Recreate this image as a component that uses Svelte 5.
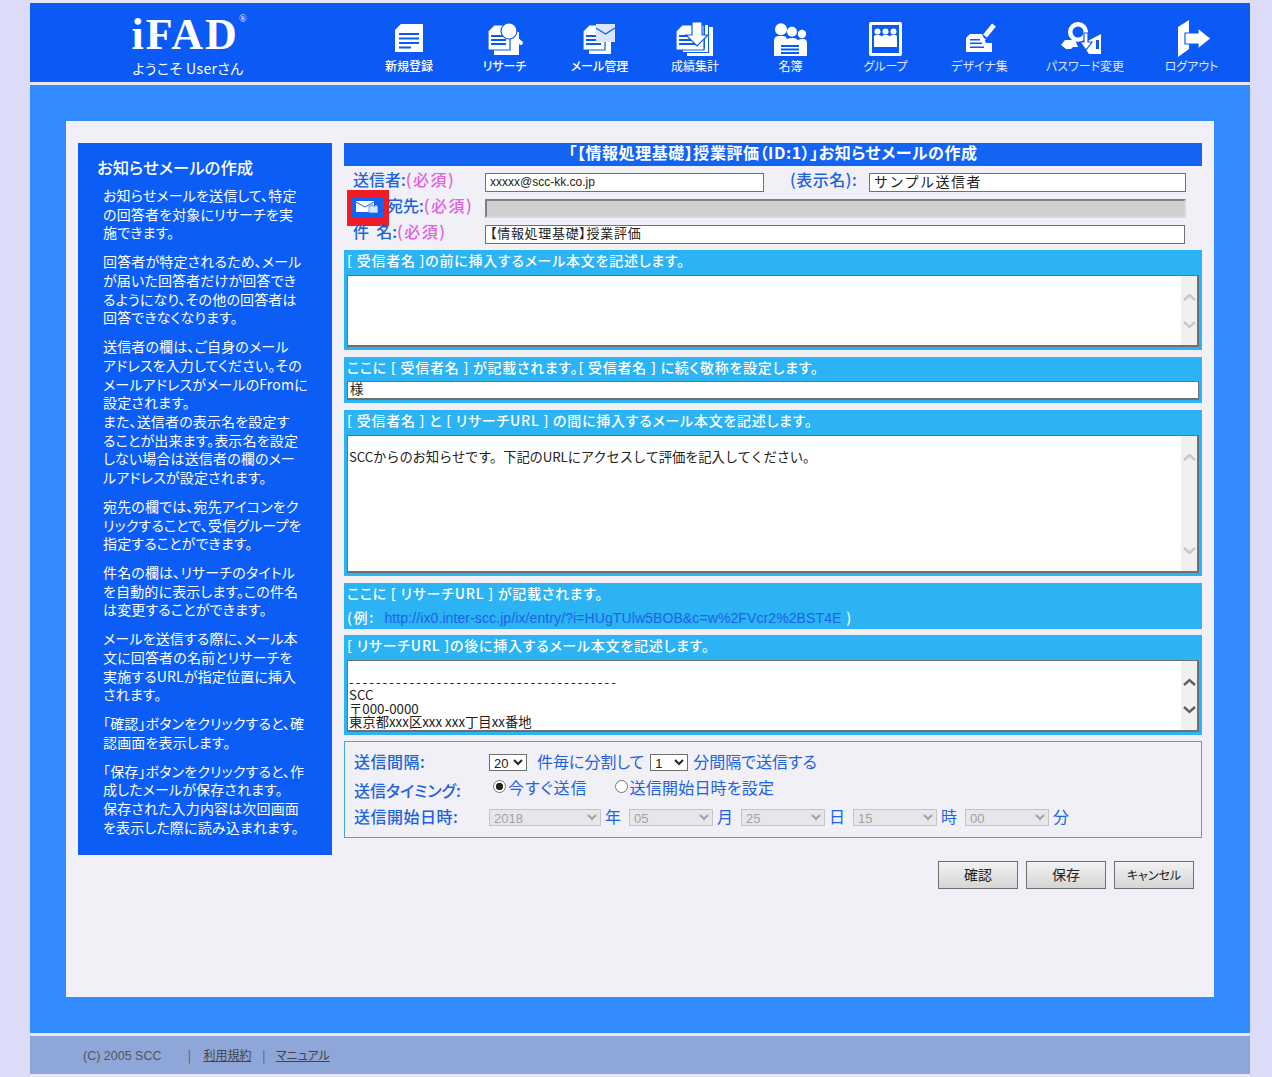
<script>
  const guide = [
    "お知らせメールを送信して、特定<br>の回答者を対象にリサーチを実<br>施できます。",
    "回答者が特定されるため、メール<br>が届いた回答者だけが回答でき<br>るようになり、その他の回答者は<br>回答できなくなります。",
    "送信者の欄は、ご自身のメール<br>アドレスを入力してください。その<br>メールアドレスがメールのFromに<br>設定されます。<br>また、送信者の表示名を設定す<br>ることが出来ます。表示名を設定<br>しない場合は送信者の欄のメー<br>ルアドレスが設定されます。",
    "宛先の欄では、宛先アイコンをク<br>リックすることで、受信グループを<br>指定することができます。",
    "件名の欄は、リサーチのタイトル<br>を自動的に表示します。この件名<br>は変更することができます。",
    "メールを送信する際に、メール本<br>文に回答者の名前とリサーチを<br>実施するURLが指定位置に挿入<br>されます。",
    "「確認」ボタンをクリックすると、確<br>認画面を表示します。",
    "「保存」ボタンをクリックすると、作<br>成したメールが保存されます。<br>保存された入力内容は次回画面<br>を表示した際に読み込まれます。"
  ];
</script>

<div class="page">
  <header>
    <div class="logo">
      <div class="mark">iFAD<sup>®</sup></div>
      <div class="hello">ようこそ Userさん</div>
    </div>
    <nav>
      <a href="#a">
        <svg viewBox="0 0 44 40">
          <path d="M14 6H36V34H8V12Z"/>
          <path class="b" d="M12 15H32V17H12ZM12 19.5H32V21.5H12ZM12 24H32V26H12ZM12 28.5H24V30.5H12Z"/>
        </svg>
        新規登録
      </a>
      <a href="#a">
        <svg viewBox="0 0 44 40">
          <path d="M11 14H36V37H11Z"/>
          <path class="o" d="M11 7H27V32H5V13Z"/>
          <path class="b" d="M8 17H23V19H8ZM8 21H23V23H8ZM8 25H23V27H8Z"/>
          <path class="h" d="M30 18L38 25"/>
          <circle class="o" cx="26" cy="13" r="8"/>
        </svg>
        リサーチ
      </a>
      <a href="#a">
        <svg viewBox="0 0 44 40">
          <path d="M11 14H33V36H11Z"/>
          <path class="o" d="M11 7H27V32H5V13Z"/>
          <path class="b" d="M8 17H18V19H8ZM8 21H23V23H8ZM8 25H23V27H8Z"/>
          <path class="env" d="M18 6H37V24H18Z"/>
          <path class="v" d="M18 10L27.5 16L37 10"/>
        </svg>
        メール管理
      </a>
      <a href="#a">
        <svg viewBox="0 0 44 40">
          <path d="M36 9H40V38H14V35H36Z"/>
          <path d="M32 7H35V34H10V31H32Z"/>
          <path class="o" d="M9 7H31V32H3V13Z"/>
          <path class="b" d="M6 17H20V19H6ZM6 21H22V23H6ZM6 25H26V27H6Z"/>
          <path class="o" d="M19 4H29V17H35L24 28L13 17H19Z"/>
        </svg>
        成績集計
      </a>
      <a href="#a">
        <svg viewBox="0 0 44 40">
          <circle cx="33" cy="16" r="4.2"/>
          <circle cx="23" cy="13.7" r="5"/>
          <circle cx="12" cy="11.3" r="6"/>
          <path d="M5 38V23Q5 18 10 18H14Q17 18 18 21Q20 20 24 20Q27 20 29 22Q31 21 34 21Q38 21 38 25V38Z"/>
          <path class="b" d="M12 27H30V29H12ZM12 30.5H30V32.5H12ZM12 34H30V36H12Z"/>
        </svg>
        名簿
      </a>
      <a href="#a">
        <svg viewBox="0 0 44 40">
          <rect x="5" y="4" width="33" height="34" rx="2"/>
          <rect class="b" x="8" y="7" width="27" height="28"/>
          <circle cx="13.5" cy="13.5" r="3"/>
          <circle cx="21.5" cy="13.5" r="3"/>
          <circle cx="29.5" cy="13.5" r="3"/>
          <path d="M10 29V18.5Q10 17 12 17H15Q16.5 17 17.5 18.5Q18.5 17 20 17H23Q24.5 17 25.5 18.5Q26.5 17 28 17H31Q33 17 33 18.5V29Z"/>
        </svg>
        グループ
      </a>
      <a href="#a">
        <svg viewBox="0 0 44 40">
          <path d="M8 20L12 16H24L28 25H34V34H8Z"/>
          <path class="b" d="M12 21H22V22.6H12ZM12 24.5H24V26H12ZM12 28.5H26V30H12Z"/>
          <path class="p" d="M27 18L36 7"/>
          <path d="M24 24L24.6 19L28 21.5Z"/>
        </svg>
        デザイナ集
      </a>
      <a href="#a">
        <svg viewBox="0 0 44 40">
          <path d="M-2 27L2 22H12L15 29H10L8 31H3Z"/>
          <circle class="ring" cx="15" cy="14" r="7.8"/>
          <path d="M19 26L38 16V36H26Z"/>
          <path class="b" d="M33 22H36V31H33Z"/>
          <path class="o" d="M21 15H25V24H29L23 32L17 24H21Z"/>
        </svg>
        パスワード変更
      </a>
      <a href="#a">
        <svg viewBox="0 0 44 40">
          <path d="M8 9L19 2V31L8 39Z"/>
          <path class="o" d="M15 15H28V10L41 20.5L28 31V26H15Z"/>
        </svg>
        ログアウト
      </a>
    </nav>
  </header>

  <main>
    <div class="panel">
      <aside>
        <h2>お知らせメールの作成</h2>
        {#each guide as text}
          <p>{@html text}</p>
        {/each}
      </aside>

      <form>
        <h1>「【情報処理基礎】授業評価（ID:1）」お知らせメールの作成</h1>

        <div class="row">
          <label class="name" for="from">送信者:<em>(必須)</em></label>
          <input id="from" class="mail" value="xxxxx@scc-kk.co.jp" />
          <label class="disp" for="disp">(表示名):</label>
          <input id="disp" class="sender" value="サンプル送信者" />
        </div>
        <div class="row">
          <span class="pick">
            <svg viewBox="0 0 31 20" width="31" height="20">
              <path class="mailback" d="M4 4H22V15H4Z"/>
              <path class="mailv" d="M4 5L13 10L22 5"/>
              <path class="grp" d="M17 9H19V8H21V9H23V8H25V9H26V16H17Z"/>
            </svg>
          </span>
          <label class="name to" for="to">宛先:<em>(必須)</em></label>
          <input id="to" class="grey" disabled />
        </div>
        <div class="row">
          <label class="name" for="subj">件&nbsp;&nbsp;名:<em>(必須)</em></label>
          <input id="subj" class="subject" value="【情報処理基礎】授業評価" />
        </div>

        <section class="first">
          <h3>[ 受信者名 ]の前に挿入するメール本文を記述します。</h3>
          <div class="area small">
            <textarea></textarea>
            <div class="scroll off">
              <svg viewBox="0 0 13 8" width="13" height="8"><path d="M1 7L6.5 2L12 7"/></svg>
              <svg viewBox="0 0 13 8" width="13" height="8"><path d="M1 1L6.5 6L12 1"/></svg>
            </div>
          </div>
        </section>

        <section>
          <h3>ここに [ 受信者名 ] が記載されます。[ 受信者名 ] に続く敬称を設定します。</h3>
          <input class="honor" value="様" />
        </section>

        <section>
          <h3>[ 受信者名 ] と [ リサーチURL ] の間に挿入するメール本文を記述します。</h3>
          <div class="area big">
            <textarea value={"\nSCCからのお知らせです。下記のURLにアクセスして評価を記入してください。"}></textarea>
            <div class="scroll off">
              <svg viewBox="0 0 13 8" width="13" height="8"><path d="M1 7L6.5 2L12 7"/></svg>
              <svg viewBox="0 0 13 8" width="13" height="8"><path d="M1 1L6.5 6L12 1"/></svg>
            </div>
          </div>
        </section>

        <section class="note">
          <h3>ここに [ リサーチURL ] が記載されます。</h3>
          <div class="eg">(例:&nbsp; <a href="#a">http://ix0.inter-scc.jp/ix/entry/?i=HUgTUlw5BOB&amp;c=w%2FVcr2%2BST4E</a> )</div>
        </section>

        <section class="last">
          <h3>[ リサーチURL ]の後に挿入するメール本文を記述します。</h3>
          <div class="area small">
            <div class="text">
              <br />
              <span class="rule">----------------------------------------</span><br />
              SCC<br />
              〒000-0000<br />
              東京都xxx区xxx xxx丁目xx番地
            </div>
            <div class="scroll">
              <svg viewBox="0 0 13 8" width="13" height="8"><path d="M1 7L6.5 2L12 7"/></svg>
              <svg viewBox="0 0 13 8" width="13" height="8"><path d="M1 1L6.5 6L12 1"/></svg>
            </div>
          </div>
        </section>

        <div class="timing">
          <div class="line one">
            <span class="cap">送信間隔:</span>
            <select class="n"><option>20</option></select>
            <span class="txt t1">件毎に分割して</span>
            <select class="n"><option>1</option></select>
            <span class="txt">分間隔で送信する</span>
          </div>
          <div class="line two">
            <span class="cap">送信タイミング:</span>
            <label class="radio r1"><input type="radio" name="when" checked />今すぐ送信</label>
            <label class="radio r2"><input type="radio" name="when" />送信開始日時を設定</label>
          </div>
          <div class="line three">
            <span class="cap">送信開始日時:</span>
            <select disabled><option>2018</option></select><span class="unit">年</span>
            <select disabled><option>05</option></select><span class="unit">月</span>
            <select disabled><option>25</option></select><span class="unit">日</span>
            <select disabled><option>15</option></select><span class="unit">時</span>
            <select disabled><option>00</option></select><span class="unit">分</span>
          </div>
        </div>

        <div class="buttons">
          <button type="button">確認</button>
          <button type="button">保存</button>
          <button type="button" class="cancel">キャンセル</button>
        </div>
      </form>
    </div>
  </main>

  <footer>
    <span class="copy">(C) 2005 SCC</span>
    <span class="sep first">|</span>
    <a href="#a">利用規約</a>
    <span class="sep">|</span>
    <a href="#a">マニュアル</a>
  </footer>
</div>

<style>
  :global(body) {
    background: #dddcf8;
    font-family: "Noto Sans CJK JP", "Liberation Sans", sans-serif;
  }

  .page {
    width: 1220px;
    margin-left: 30px;
    padding: 3px 0;
    background: #e6e6f6;
    display: flex;
    flex-direction: column;
    gap: 3px;
    font-feature-settings: "palt";
  }

  header {
    height: 79px;
    background: #0b5af5;
    display: flex;
    color: #fff;
  }

  .logo {
    width: 316px;
    margin-right: 15px;
    text-align: center;
  }

  .mark {
    font: bold 44px/46px "Liberation Serif", serif;
    letter-spacing: 2px;
    margin-top: 9px;
    height: 46px;
    padding-left: 2px;
  }

  .mark sup {
    font-size: 10px;
    line-height: 0;
    vertical-align: 27px;
    font-weight: normal;
    letter-spacing: 0;
  }

  .hello {
    font-size: 14px;
    line-height: 18px;
    margin-top: 1px;
    letter-spacing: 0.4px;
  }

  nav {
    display: grid;
    grid-template-columns: 96px 95px 95px 96px 95px 95px 93px 118px 95px;
    padding-top: 15px;
  }

  nav a {
    display: flex;
    flex-direction: column;
    align-items: center;
    color: #fff;
    font-size: 12px;
    line-height: 16px;
    text-decoration: none;
    white-space: nowrap;
  }

  nav a:nth-child(-n+3) {
    font-weight: 500;
  }

  nav a:nth-child(n+6) {
    color: #dfe6ff;
  }

  nav svg {
    width: 44px;
    height: 40px;
    overflow: visible;
    fill: #fff;
  }

  nav .b { fill: #0b5af5; }
  nav .o { fill: #fff; stroke: #0b5af5; stroke-width: 1.2; }
  nav .h { stroke: #fff; stroke-width: 4; stroke-linecap: round; fill: none; }
  nav .p { stroke: #fff; stroke-width: 5; fill: none; }
  nav .env { fill: #dbe6fd; }
  nav .v { fill: none; stroke: #0b5af5; stroke-width: 1.2; }
  nav .ring { fill: none; stroke: #fff; stroke-width: 4.5; }

  main {
    height: 948px;
    box-sizing: border-box;
    padding: 36px;
    background: #348aff;
  }

  .panel {
    height: 876px;
    box-sizing: border-box;
    padding: 22px 12px 0;
    background: #f0f0f6;
    display: flex;
    gap: 12px;
    align-items: flex-start;
  }

  aside {
    width: 254px;
    height: 712px;
    box-sizing: border-box;
    flex: none;
    padding: 12px 0 0 25px;
    background: #0b5df5;
    color: #fff;
    white-space: nowrap;
  }

  aside h2 {
    margin: 0 0 7px -6px;
    font-size: 16.4px;
    line-height: 24px;
    font-weight: 500;
  }

  aside p {
    margin: 0 0 10.1px;
    font-size: 14px;
    line-height: 18.7px;
    letter-spacing: 0.15px;
  }

  form {
    width: 858px;
    flex: none;
  }

  h1 {
    margin: 0 0 3px;
    height: 23px;
    background: #1464f4;
    color: #fff;
    font-size: 16px;
    line-height: 19px;
    font-weight: 700;
    text-align: center;
    letter-spacing: 0.55px;
  }

  .row {
    height: 26px;
    display: flex;
    align-items: center;
    padding-left: 9px;
    position: relative;
  }

  .name {
    width: 132px;
    flex: none;
    margin-top: -6px;
    color: #1e62dc;
    font-size: 16px;
    font-weight: 500;
    white-space: nowrap;
  }

  .name em {
    font-style: normal;
    color: #e060e0;
    letter-spacing: 1.5px;
  }

  .to {
    padding-left: 34px;
    width: 98px;
  }

  .pick {
    position: absolute;
    left: 3px;
    top: -5px;
    width: 32px;
    height: 21px;
    border: solid #ee1c25;
    border-width: 7px 5px 8px;
    background: #1464f4;
    display: flex;
  }

  .mailback { fill: #fff; }
  .mailv { fill: none; stroke: #1464f4; stroke-width: 1; }
  .grp { fill: #d8e4f8; stroke: #1464f4; stroke-width: 0.6; }

  input:not([type="radio"]) {
    box-sizing: border-box;
    height: 19px;
    padding: 0 4px 3px;
    border: 1px solid #707070;
    background: #fff;
    font: 12px "Noto Sans CJK JP", sans-serif;
    color: #222;
    outline: none;
    border-radius: 0;
  }

  .mail { width: 279px; padding-bottom: 0 !important; font-family: "Liberation Sans", sans-serif !important; }
  .disp { width: 79px; margin: -6px 0 0 26px; flex: none; color: #1e62dc; font-size: 16px; font-weight: 500; letter-spacing: 0.5px; white-space: nowrap; }
  .sender { width: 317px; font-size: 14px !important; letter-spacing: 1.5px; }
  .grey { width: 701px; background: #cfcfcf !important; border: 2px solid !important; border-color: #808080 #d8d8d8 #d8d8d8 #808080 !important; }
  .subject { width: 700px; font-size: 13px !important; font-feature-settings: "palt" !important; letter-spacing: 0.7px; }

  section {
    margin-top: 7px;
    padding: 0 3px 3px;
    background: #2bb3f3;
  }

  section.first {
    margin-top: 3px;
  }

  section.last {
    margin-top: 6px;
  }

  h3 {
    margin: 0;
    height: 25px;
    color: #fff;
    font-size: 14px;
    line-height: 20px;
    font-weight: 500;
    letter-spacing: 0.75px;
    white-space: nowrap;
  }

  .honor {
    display: block;
    width: 100%;
    height: 19px;
    padding: 0 2px 3px !important;
    border-width: 1px 1px 2px 1px !important;
    font-size: 13.33px !important;
    margin-top: -1px;
  }

  .area {
    display: flex;
    box-sizing: border-box;
    border: 2px solid #707070;
    border-width: 1px 2px 2px 1px;
    background: #fff;
  }

  .small { height: 72px; }
  .big { height: 138px; }

  textarea, .text {
    flex: 1;
    box-sizing: border-box;
    padding: 0 1px;
    border: 0;
    margin: 0;
    resize: none;
    outline: none;
    overflow: hidden;
    font: 13.33px/13.6px "Noto Sans CJK JP", sans-serif;
    color: #222;
    background: #fff;
  }

  textarea { letter-spacing: -0.15px; }

  .rule { letter-spacing: 2.1px; }

  .scroll {
    width: 16px;
    flex: none;
    box-sizing: border-box;
    padding: 17px 0 16px;
    background: #f0f0f0;
    display: flex;
    flex-direction: column;
    justify-content: space-between;
    align-items: center;
  }

  .scroll path {
    fill: none;
    stroke: #606060;
    stroke-width: 2.4;
  }

  .off path {
    stroke: #c8c8c8;
  }

  .note {
    height: 46px;
    box-sizing: border-box;
  }

  .eg {
    color: #fff;
    font-size: 14px;
    line-height: 18px;
    font-weight: 500;
    letter-spacing: 1.6px;
    white-space: nowrap;
  }

  .eg a {
    color: #1e62e8;
    text-decoration: none;
    font: 14px "Liberation Sans", sans-serif;
    letter-spacing: 0.1px;
  }

  .timing {
    margin-top: 6px;
    height: 97px;
    box-sizing: border-box;
    border: 1px solid #3aa8ea;
    padding: 7px 9px 0;
    color: #1e62dc;
    font-size: 16px;
  }

  .line {
    display: flex;
    align-items: center;
    height: 27px;
    white-space: nowrap;
  }

  .cap {
    width: 135px;
    flex: none;
    font-weight: 500;
  }

  .one .cap, .three .cap { letter-spacing: 0.5px; }
  .one span, .three span { margin-top: -4px; }

  .two .cap { position: relative; top: 1px; }
  .two { margin-top: -1px; }
  .three { margin-top: 2px; }

  .txt { margin-left: 10px; }
  .t1 { margin-right: 6px; }
  .one .txt:last-child { margin-left: 5px; }

  select {
    width: 112px;
    height: 17px;
    box-sizing: border-box;
    flex: none;
    padding: 0;
    border: 1px solid #707070;
    border-radius: 0;
    background: #fff;
    font: 13px "Liberation Sans", sans-serif;
    color: #222;
  }

  select.n { width: 38px; }

  select:disabled {
    width: 84px;
    background: #e4e4e4;
    border-color: #b4b4b4;
    color: #808080;
  }

  .three select:first-of-type { width: 112px; }

  .unit {
    width: 28px;
    flex: none;
    padding-left: 4px;
    box-sizing: border-box;
  }

  .radio {
    display: inline-flex;
    align-items: center;
    position: relative;
    top: -2px;
  }

  .r1 { margin-left: 4px; margin-right: 27px; letter-spacing: 1px; }
  .r2 { letter-spacing: 0.2px; }

  .radio input {
    appearance: none;
    width: 13px;
    height: 13px;
    margin: 0 2px 0 0;
    border: 1px solid #777;
    border-radius: 50%;
    background: #fff;
  }

  .radio input:checked {
    background: radial-gradient(circle, #222 0 3.4px, #fff 4px);
  }

  .buttons {
    display: flex;
    justify-content: flex-end;
    gap: 8px;
    margin-top: 23px;
    padding-right: 8px;
  }

  button {
    width: 80px;
    height: 28px;
    padding: 0 0 2px;
    border: 1px solid #707070;
    border-radius: 0;
    background: linear-gradient(#f2f2f2, #d6d6d6);
    color: #222;
    font: 14px "Noto Sans CJK JP", sans-serif;
    font-feature-settings: "palt";
  }

  .cancel { font-size: 12px; }

  footer {
    height: 38px;
    background: #8fa6d8;
    color: #555;
    font-size: 12px;
    line-height: 38px;
    padding-left: 53px;
    white-space: nowrap;
  }

  footer a { color: #444; }

  .copy { display: inline-block; width: 102px; font-family: "Liberation Sans", sans-serif; font-size: 12.5px; }
  .sep { display: inline-block; width: 13px; }
  footer a + .sep { width: 11px; margin-left: 8px; }
</style>
